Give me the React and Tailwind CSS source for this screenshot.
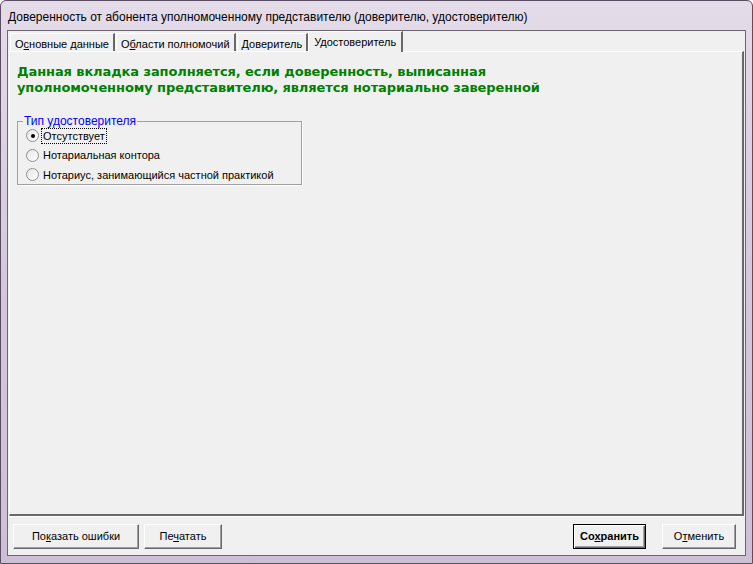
import React from 'react';

const ui = { fontFamily: '"Liberation Sans", Arial, sans-serif' };

function Radio({ checked, label, focused }) {
  return (
    <div className="flex items-center h-[19.5px]">
      <span className="relative w-[13px] h-[13px] rounded-full border border-[#8e8f8f] bg-gradient-to-br from-[#e6e6e6] to-white shrink-0">
        {checked && (
          <span className="absolute left-[3.5px] top-[3.5px] w-[4px] h-[4px] rounded-full bg-black"></span>
        )}
      </span>
      <span
        className={
          'ml-[2px] px-[1px] leading-[14px] ' +
          (focused ? 'border border-dotted border-black' : 'border border-transparent')
        }
      >
        {label}
      </span>
    </div>
  );
}

function Tab({ children, active }) {
  if (active) {
    return (
      <div className="relative z-10 -mb-[1px] h-[21px] px-[5px] pt-[2px] bg-[#f0f0f0] border-l border-t border-white border-r-2 border-r-[#696969] -ml-[1px]">
        {children}
      </div>
    );
  }
  return (
    <div className="h-[18px] px-[4px] pt-[2px] bg-[#f0f0f0] border-l border-t border-white border-r-2 border-r-[#696969] mr-[1px]">
      {children}
    </div>
  );
}

function Btn({ children, def, w }) {
  return (
    <button
      className={
        'h-[25px] bg-[#f0f0f0] text-[11px] text-black ' +
        (def
          ? 'border border-black shadow-[inset_1px_1px_0_#fff,inset_-1px_-1px_0_#696969,inset_-2px_-2px_0_#a0a0a0] font-bold'
          : 'border border-t-white border-l-white border-r-[#696969] border-b-[#696969] shadow-[inset_-1px_-1px_0_#a0a0a0]') +
        ' ' +
        w
      }
      style={ui}
    >
      {children}
    </button>
  );
}

export default function App() {
  return (
    <div
      className="w-[753px] h-[564px] flex flex-col bg-gradient-to-b from-[#e4dce9] via-[#d5c8dc] to-[#cdbfd5] border border-[#5a4f62] rounded-t-[6px] overflow-hidden"
      style={ui}
    >
      <div className="h-[29px] px-[7px] pt-[7px] text-[12px] text-black">
        Доверенность от абонента уполномоченному представителю (доверителю, удостоверителю)
      </div>
      <div className="mx-[6px] mb-[7px] flex-1 flex flex-col bg-[#f0f0f0] border border-[#6d6471] text-[11px] text-black">
        <div className="flex items-end h-[20px] pl-[2px]">
          <Tab>О<u>с</u>новные данные</Tab>
          <Tab>О<u>б</u>ласти полномочий</Tab>
          <Tab><u>Д</u>оверитель</Tab>
          <Tab active>Удостоверитель</Tab>
        </div>
        <div className="h-[465px] mx-[1px] border-l border-t border-white border-r-2 border-r-[#696969] border-b-2 border-b-[#696969] px-[7px] pt-[12px]">
          <div
            className="text-[13px] font-bold text-[#008000] leading-[16px] tracking-[-0.1px]"
            style={{ fontFamily: '"DejaVu Sans", "Liberation Sans", sans-serif' }}
          >
            Данная вкладка заполняется, если доверенность, выписанная
            <br />
            уполномоченному представителю, является нотариально заверенной
          </div>
          <div className="relative mt-[25px] w-[285px] h-[64px] border border-[#a0a0a0] shadow-[1px_1px_0_#fff] pl-[8px] pt-[2px]">
            <span className="absolute -top-[8px] left-[5px] bg-[#f0f0f0] px-[1px] text-[12px] text-[#0000ff] leading-[14px]">
              Тип удостоверителя
            </span>
            <div className="pt-[2px]">
              <Radio checked focused label="Отсутствует" />
              <Radio label="Нотариальная контора" />
              <Radio label="Нотариус, занимающийся частной практикой" />
            </div>
          </div>
        </div>
        <div className="flex-1 flex items-center pl-[5px] pr-[9px] border-t border-white">
          <Btn w="w-[126px]">По<u>к</u>азать ошибки</Btn>
          <Btn w="w-[78px] ml-[5px]">Пе<u>ч</u>атать</Btn>
          <div className="flex-1"></div>
          <Btn def w="w-[73px]">Со<u>х</u>ранить</Btn>
          <Btn w="w-[74px] ml-[16px]">О<u>т</u>менить</Btn>
        </div>
      </div>
    </div>
  );
}
